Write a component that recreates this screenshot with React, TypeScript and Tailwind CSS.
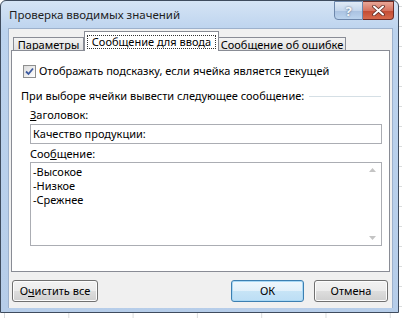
import React from "react";

const font = { fontFamily: '"Noto Sans", "Segoe UI", sans-serif' };

function Checkbox() {
  return (
    <div className="flex h-[13px] w-[13px] items-center justify-center border border-[#8e8f8f] bg-[linear-gradient(135deg,#dcdcdc,#ffffff)]">
      <svg width="9" height="9" viewBox="0 0 9 9">
        <path d="M1 4.5 L3.5 7 L8 1.5" fill="none" stroke="#3c5aa0" strokeWidth="1.8" />
      </svg>
    </div>
  );
}

function Btn({ children, primary, className }: { children: React.ReactNode; primary?: boolean; className?: string }) {
  return (
    <button
      className={
        "flex h-[22px] items-center justify-center rounded-[3px] border text-[11px] text-black " +
        (primary
          ? "border-[#3c7fb1] bg-[linear-gradient(#eef7fd,#e1f0fa_50%,#c7e4f6_51%,#bcdef5)] shadow-[inset_0_0_0_1px_#a8d8f5]"
          : "border-[#707070] bg-[linear-gradient(#f2f2f2,#ebebeb_50%,#dddddd_51%,#cfcfcf)] shadow-[inset_0_0_0_1px_#fcfcfc]") +
        " " + (className ?? "")
      }
    >
      {children}
    </button>
  );
}

export default function App() {
  return (
    <div
      style={font}
      className="h-[318px] w-[402px] overflow-hidden bg-white bg-[linear-gradient(to_right,#dadcdd_1px,transparent_1px),linear-gradient(to_bottom,#dadcdd_1px,transparent_1px)] bg-[size:64.3px_20px] bg-[position:4px_6px] text-[11px] leading-[14px] text-black"
    >
      {/* окно диалога */}
      <div className="flex h-[313px] w-[399px] flex-col rounded-t-[6px] border border-[#3f4c5e] bg-[linear-gradient(#d5e4f5,#bcd3ee_30px,#b6cde9)]">
        {/* заголовок */}
        <div className="flex h-[27px] items-start">
          <div className="ml-[8px] mt-[7px] text-[11.5px] text-[#1e1e1e]">Проверка вводимых значений</div>
          <div className="ml-auto mr-[4px] flex">
            <div className="flex h-[19px] w-[29px] items-center justify-center rounded-bl-[4px] border border-[#6d87ab] bg-[linear-gradient(#e1ebf6,#c4d6ec_50%,#a9c1e0_51%,#bcd4ee)] text-[13px] font-bold text-[#f4f7fb] [text-shadow:0_0_2px_#44556f]">
              ?
            </div>
            <div className="flex h-[19px] w-[31px] items-center justify-center rounded-br-[4px] border border-l-0 border-[#6e2b25] bg-[linear-gradient(#e8a798,#d7735f_50%,#c24a32_51%,#d76a4c)]">
              <svg width="13" height="11" viewBox="0 0 13 11">
                <path d="M2 1.5 L11 9.5 M11 1.5 L2 9.5" stroke="#5a2a24" strokeWidth="3.6" strokeLinecap="round" />
                <path d="M2 1.5 L11 9.5 M11 1.5 L2 9.5" stroke="#ffffff" strokeWidth="2" strokeLinecap="round" />
              </svg>
            </div>
          </div>
        </div>

        {/* клиентская область */}
        <div className="ml-[7px] flex h-[280px] w-[385px] flex-col border-t border-l border-r border-[#9db1cc] bg-[#f0f0f0] pl-[2px]">
          {/* вкладки */}
          <div className="flex h-[21px] items-end whitespace-nowrap pl-[2px]">
            <div className="-mb-px flex h-[14px] w-[71px] items-center justify-center border border-b-0 border-[#898c95] bg-[linear-gradient(#f3f3f3,#e0e0e0)]">
              Параметры
            </div>
            <div className="relative z-10 -mb-px flex h-[20px] w-[135px] items-center justify-center border border-b-0 border-[#898c95] bg-white">
              <span className="border border-dotted border-[#333] px-[4px] leading-[12px]">Сообщение для ввода</span>
            </div>
            <div className="-mb-px flex h-[14px] w-[127px] items-center justify-center border border-b-0 border-l-0 border-[#898c95] bg-[linear-gradient(#f3f3f3,#e0e0e0)]">
              Сообщение об ошибке
            </div>
          </div>

          {/* панель вкладки */}
          <div className="flex h-[222px] w-[379px] flex-col border border-[#898c95] bg-white">
            <div className="ml-[11px] mt-[13px] flex items-center gap-[2px]">
              <Checkbox />
              <span className="ml-[1px]">
                Отображать подсказку, если ячейка является <span className="underline">т</span>екущей
              </span>
            </div>

            <div className="ml-[9px] mt-[11px] flex items-center">
              <span>При выборе ячейки вывести следующее сообщение:</span>
              <div className="ml-[5px] mr-[8px] h-px flex-1 bg-[#d5dfe5]" />
            </div>

            <div className="ml-[18px] mt-[5px]">
              <span className="underline">З</span>аголовок:
            </div>
            <div className="ml-[18px] mt-[2px] flex h-[20px] w-[352px] items-center border border-[#abadb3] bg-white pl-[2px]">
              Качество продукции:
            </div>

            <div className="ml-[18px] mt-[3px]">
              Соо<span className="underline">б</span>щение:
            </div>
            <div className="ml-[18px] mt-[1px] flex h-[84px] w-[352px] border border-[#abadb3] bg-white">
              <div className="flex-1 pl-[2px] pt-[2px]">
                <div>-Высокое</div>
                <div>-Низкое</div>
                <div>-Срежнее</div>
              </div>
              <div className="flex w-[17px] flex-col items-center justify-between bg-white py-[5px]">
                <svg width="7" height="4" viewBox="0 0 7 4">
                  <path d="M0 4 L3.5 0 L7 4 Z" fill="#c4c4c4" />
                </svg>
                <svg width="7" height="4" viewBox="0 0 7 4">
                  <path d="M0 0 L3.5 4 L7 0 Z" fill="#c4c4c4" />
                </svg>
              </div>
            </div>
          </div>

          {/* кнопки */}
          <div className="mt-[8px] flex">
            <Btn className="ml-[1px] w-[86px]">
              <span>
                О<span className="underline">ч</span>истить все
              </span>
            </Btn>
            <Btn primary className="ml-auto w-[73px]">
              ОК
            </Btn>
            <Btn className="ml-[10px] mr-[4px] w-[74px]">Отмена</Btn>
          </div>
        </div>
      </div>
    </div>
  );
}
